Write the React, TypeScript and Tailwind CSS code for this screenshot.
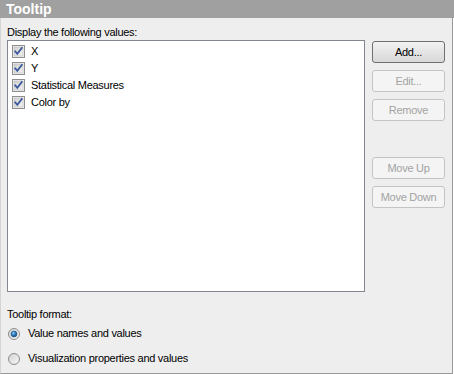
import React from "react";

const items = ["X", "Y", "Statistical Measures", "Color by"];

const CheckBox = () => (
  <svg width="13" height="13" viewBox="0 0 13 13" className="shrink-0">
    <defs>
      <linearGradient id="cbFill" x1="0" y1="0" x2="1" y2="1">
        <stop offset="0" stopColor="#cfcfcf" />
        <stop offset="1" stopColor="#f4f4f4" />
      </linearGradient>
    </defs>
    <rect x="0.5" y="0.5" width="12" height="12" fill="#f4f4f4" stroke="#8f8f8f" />
    <rect x="2" y="2" width="9" height="9" fill="url(#cbFill)" stroke="#b9b9b9" strokeWidth="0.6" />
    <path d="M3.2 6.4 L5.3 8.8 L9.8 2.9" fill="none" stroke="#3c5a9c" strokeWidth="1.8" strokeLinecap="square" />
  </svg>
);

const Radio = ({ checked }: { checked?: boolean }) => (
  <svg width="12" height="12" viewBox="0 0 12 12" className="shrink-0">
    <defs>
      <linearGradient id="rdFill" x1="0" y1="0" x2="1" y2="1">
        <stop offset="0" stopColor="#d2d2d2" />
        <stop offset="1" stopColor="#f7f7f7" />
      </linearGradient>
      <radialGradient id="rdDot" cx="0.4" cy="0.35" r="0.7">
        <stop offset="0" stopColor="#8fd0f5" />
        <stop offset="0.5" stopColor="#2a78b8" />
        <stop offset="1" stopColor="#174a7c" />
      </radialGradient>
    </defs>
    <circle cx="6" cy="6" r="5.5" fill="url(#rdFill)" stroke="#8c8c8c" strokeWidth="1" />
    {checked && <circle cx="6" cy="6" r="3" fill="url(#rdDot)" stroke="#1f4f80" strokeWidth="0.6" />}
  </svg>
);

const Btn = ({ label, enabled }: { label: string; enabled?: boolean }) => (
  <div
    className={
      enabled
        ? "h-[22px] w-[73px] flex items-center justify-center rounded-[3px] border border-[#707070] bg-gradient-to-b from-[#f2f2f2] to-[#d8d8d8] text-black"
        : "h-[22px] w-[73px] flex items-center justify-center rounded-[3px] border border-[#c4c4c4] bg-[#f4f4f4] text-[#a3a3a3]"
    }
  >
    {label}
  </div>
);

export default function App() {
  return (
    <div
      className="w-[454px] h-[374px] flex flex-col text-[11px] leading-[13px] tracking-[-0.28px] text-black"
      style={{ fontFamily: '"Liberation Sans", Arial, sans-serif' }}
    >
      <div className="h-[18px] shrink-0 bg-[#a0a0a0] pl-[6px] text-[14px] leading-[18px] font-bold text-white tracking-normal">
        Tooltip
      </div>
      <div className="flex-1 mr-[1px] bg-[#eeeeee] border-l border-l-[#d4d4d4] border-r border-b border-[#999999] pl-[6px] pt-[8px]">
        <div className="h-[13px]">Display the following values:</div>
        <div className="mt-[1px] flex gap-[7px]">
          <div className="w-[358px] h-[252px] border border-[#828790] bg-white pt-[2px] pl-[4px]">
            {items.map((it) => (
              <div key={it} className="h-[17px] flex items-center gap-[6px]">
                <CheckBox />
                <span>{it}</span>
              </div>
            ))}
          </div>
          <div className="mt-[1px] flex flex-col gap-[7px]">
            <Btn label="Add..." enabled />
            <Btn label="Edit..." />
            <Btn label="Remove" />
            <div className="h-[22px]" />
            <Btn label="Move Up" />
            <Btn label="Move Down" />
          </div>
        </div>
        <div className="mt-[16px] h-[13px]">Tooltip format:</div>
        <div className="mt-[4px] flex flex-col gap-[8px] pl-[1px]">
          <div className="h-[17px] flex items-center gap-[8px]">
            <Radio checked />
            <span>Value names and values</span>
          </div>
          <div className="h-[17px] flex items-center gap-[8px]">
            <Radio />
            <span>Visualization properties and values</span>
          </div>
        </div>
      </div>
    </div>
  );
}
